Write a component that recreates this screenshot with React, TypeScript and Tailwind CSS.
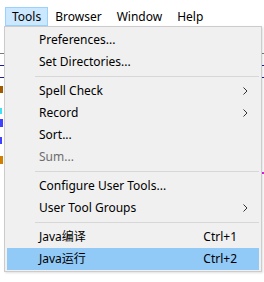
type Item =
  | { kind: 'sep' }
  | { kind: 'item'; label: string; shortcut?: string; submenu?: boolean; disabled?: boolean; active?: boolean }

const items: Item[] = [
  { kind: 'item', label: 'Preferences...' },
  { kind: 'item', label: 'Set Directories...' },
  { kind: 'sep' },
  { kind: 'item', label: 'Spell Check', submenu: true },
  { kind: 'item', label: 'Record', submenu: true },
  { kind: 'item', label: 'Sort...' },
  { kind: 'item', label: 'Sum...', disabled: true },
  { kind: 'sep' },
  { kind: 'item', label: 'Configure User Tools...' },
  { kind: 'item', label: 'User Tool Groups', submenu: true },
  { kind: 'sep' },
  { kind: 'item', label: 'Java编译', shortcut: 'Ctrl+1' },
  { kind: 'item', label: 'Java运行', shortcut: 'Ctrl+2', active: true },
]

const font = { fontFamily: '"Noto Sans", "Noto Sans CJK SC", sans-serif' }

function Chevron() {
  return (
    <svg width="5" height="8" viewBox="0 0 5 8" className="text-[#333]">
      <path d="M0.5 0.5 L4 4 L0.5 7.5" fill="none" stroke="currentColor" strokeWidth="1" />
    </svg>
  )
}

// Windows-style dropdown opened from the Tools menu.
function ToolsMenu() {
  return (
    <div className="absolute left-[4px] top-[26px] w-[258px] border border-[#cccccc] bg-[#f0f0f0] px-[2px] pt-[2px] pb-[1px] shadow-[1px_1px_2px_rgba(0,0,0,0.12)]">
      {items.map((it, i) =>
        it.kind === 'sep' ? (
          <div key={i} className="flex h-[7px] items-center pl-[28px]">
            <div className="h-px w-full bg-[#d7d7d7]" />
          </div>
        ) : (
          <div
            key={i}
            className={`flex h-[22px] items-center pl-[32px] pr-[8px] text-[12px] leading-none ${
              it.active ? 'bg-[#91c9f7]' : ''
            } ${it.disabled ? 'text-[#6d6d6d]' : 'text-black'}`}
          >
            <span className="flex-1">{it.label}</span>
            {it.shortcut && <span className="mr-[14px]">{it.shortcut}</span>}
            {it.submenu && (
              <span className="mr-[3px] flex items-center">
                <Chevron />
              </span>
            )}
          </div>
        ),
      )}
    </div>
  )
}

export default function App() {
  const menus = ['Tools', 'Browser', 'Window', 'Help']
  return (
    <div className="relative h-[282px] w-[264px] overflow-hidden bg-white" style={font}>
      {/* menu bar */}
      <div className="flex h-[27px] items-start pl-[5px] pt-[7px] text-[12px] text-black">
        {menus.map((m, i) => (
          <div
            key={m}
            className={`flex h-[19px] items-center border px-[6px] leading-none ${
              i === 0 ? 'border-[#99d1ff] bg-[#cce8ff]' : 'border-transparent'
            } ${i === 1 || i === 2 ? 'pr-[7px]' : ''}`}
          >
            {m}
          </div>
        ))}
      </div>

      {/* editor content peeking out from behind the menu */}
      <div className="flex flex-col">
        <div className="mt-[26px] h-px bg-[#7a7a7a]" />
        <div className="mt-[11px] h-px bg-[#1a1a9a]" />
        <div className="mt-[11px] h-px bg-[#1a1a9a]" />
        <div className="mt-[8px] h-[7px] w-[3px] bg-[#a05a00]" />
        <div className="mt-[15px] h-[6px] w-[2px] bg-[#40e0f0]" />
        <div className="mt-[5px] h-[8px] w-[3px] bg-[#4040ff]" />
        <div className="mt-[10px] h-[7px] w-[2px] bg-[#4040ff]" />
        <div className="mt-[12px] h-[8px] w-[3px] bg-[#d08000]" />
        <div className="ml-[262px] mt-[8px] h-[2px] w-[2px] bg-[#e020e0]" />
      </div>

      <ToolsMenu />
    </div>
  )
}
